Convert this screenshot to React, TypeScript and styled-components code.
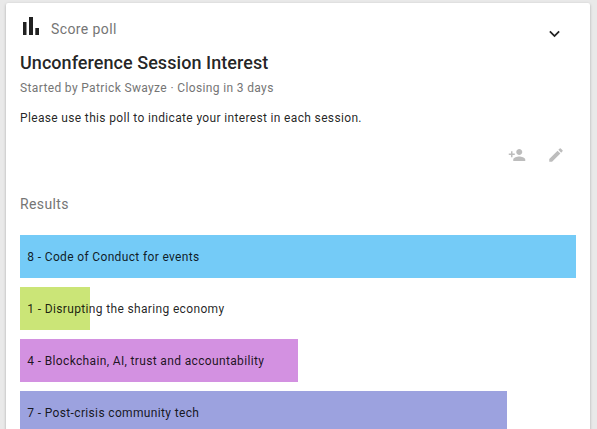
import React from 'react';
import styled, { createGlobalStyle } from 'styled-components';

const GlobalStyle = createGlobalStyle`
  * { box-sizing: border-box; }
  html, body { margin: 0; height: 100%; overflow: hidden; }
  body { background: #e9e9e9; font-family: Roboto, sans-serif; color: rgba(0, 0, 0, 0.87); }
`;
const Page = styled.main`
  height: 429px;
  overflow: hidden;
  padding: 3px 7px 0 6px;
`;
const Card = styled.article`
  height: 460px;
  background: #fff;
  border-radius: 2px;
  padding: 0 14px;
  box-shadow: 0 1px 3px rgba(0, 0, 0, 0.25), 0 1px 1px rgba(0, 0, 0, 0.14);
`;
const Header = styled.header`
  display: flex;
  align-items: center;
  height: 48px;
  padding: 4px 11px 0 0;
  svg { display: block; }
`;
const ChartIcon = styled.svg`
  margin: 0 0 6px 3px;
`;
const Kind = styled.span`
  flex: 1;
  padding-left: 12px;
  font-size: 14px;
  line-height: 20px;
  letter-spacing: 0.4px;
  color: #757575;
`;
const IconButton = styled.button`
  display: flex;
  border: 0;
  padding: 0;
  background: none;
  color: inherit;
`;
const MenuButton = styled(IconButton)`
  margin-top: 11px;
`;
const Title = styled.h1`
  margin: 0;
  font-size: 18px;
  line-height: 24px;
  font-weight: 500;
  letter-spacing: 0.05px;
`;
const Meta = styled.p`
  margin: 3px 0 0;
  font-size: 12px;
  line-height: 20px;
  letter-spacing: 0.36px;
  color: #757575;
`;
const Details = styled.p`
  margin: 10px 0 0;
  font-size: 12px;
  line-height: 20px;
  letter-spacing: 0.345px;
`;
const Actions = styled.div`
  display: flex;
  justify-content: flex-end;
  gap: 21px;
  padding: 18.4px 10.6px 0 0;
  height: 36px;
  color: #bdbdbd;
`;
const Subhead = styled.h2`
  margin: 30px 0 21px;
  font-size: 14px;
  line-height: 20px;
  font-weight: 400;
  letter-spacing: 0.37px;
  color: #757575;
`;
const Results = styled.ul`
  display: grid;
  gap: 9px;
  margin: 0;
  padding: 0;
  list-style: none;
`;
const Bar = styled.li<{ $width: number; $color: string }>`
  width: ${p => p.$width}px;
  height: 43px;
  padding-left: 7.3px;
  background: ${p => p.$color};
  font-size: 12px;
  line-height: 44px;
  letter-spacing: 0.35px;
  white-space: nowrap;
`;

const results = [
  { score: 8, name: 'Code of Conduct for events', width: 556, color: '#74cbf7' },
  { score: 1, name: 'Disrupting the sharing economy', width: 70, color: '#cbe577' },
  { score: 4, name: 'Blockchain, AI, trust and accountability', width: 278, color: '#d391e1' },
  { score: 7, name: 'Post-crisis community tech', width: 487, color: '#9ca2df' },
];

const Icon = ({ d, size }: { d: string; size: number }) => (
  <svg width={size} height={size} viewBox="0 0 24 24" fill="currentColor"><path d={d} /></svg>
);

export default function App() {
  return (
    <Page>
      <GlobalStyle />
      <Card>
        <Header>
          <ChartIcon width="16" height="18" viewBox="0 0 16 18" fill="currentColor">
            <path d="M0 5h3.5v13H0zM6 0h4v18H6zM12.3 11H16v7h-3.7z" />
          </ChartIcon>
          <Kind>Score poll</Kind>
          <MenuButton aria-label="Collapse"><Icon size={21} d="M7.41 7.84 12 12.42l4.59-4.58L18 9.25l-6 6-6-6z" /></MenuButton>
        </Header>
        <Title>Unconference Session Interest</Title>
        <Meta>Started by Patrick Swayze · Closing in 3 days</Meta>
        <Details>Please use this poll to indicate your interest in each session.</Details>
        <Actions>
          <IconButton aria-label="Add people"><Icon size={18} d="M15 12c2.21 0 4-1.79 4-4s-1.79-4-4-4-4 1.79-4 4 1.79 4 4 4zm-9-2V7H4v3H1v2h3v3h2v-3h3v-2H6zm9 4c-2.67 0-8 1.34-8 4v2h16v-2c0-2.66-5.33-4-8-4z" /></IconButton>
          <IconButton aria-label="Edit"><Icon size={18} d="M3 17.25V21h3.75L17.81 9.94l-3.75-3.75L3 17.25zM20.71 7.04a1 1 0 0 0 0-1.41l-2.34-2.34a1 1 0 0 0-1.41 0l-1.83 1.83 3.75 3.75 1.83-1.83z" /></IconButton>
        </Actions>
        <Subhead>Results</Subhead>
        <Results>
          {results.map(r => <Bar key={r.name} $width={r.width} $color={r.color}>{r.score} - {r.name}</Bar>)}
        </Results>
      </Card>
    </Page>
  );
}
